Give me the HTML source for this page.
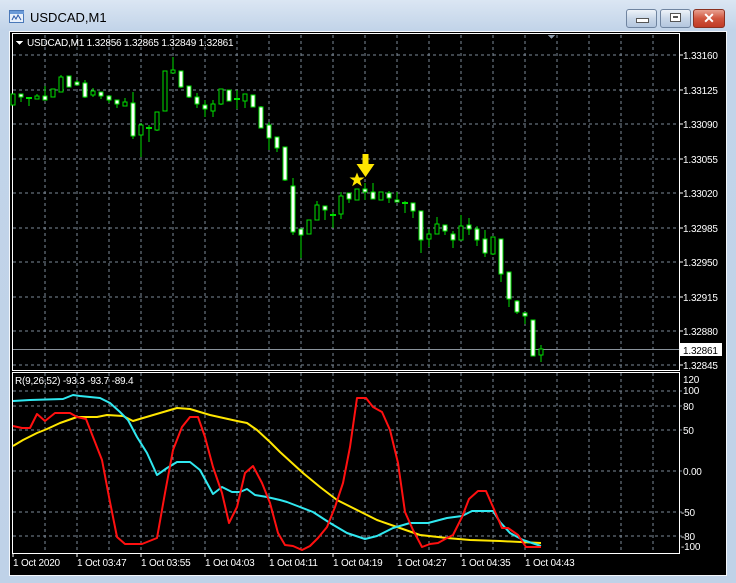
<!DOCTYPE html>
<html><head><meta charset="utf-8"><style>
html,body{margin:0;padding:0;width:736px;height:583px;overflow:hidden;background:#c4d5e8;font-family:"Liberation Sans",sans-serif}
.win{position:absolute;left:0;top:0;width:736px;height:583px;background:linear-gradient(#dbe6f3,#c2d4e9 30px,#bfd2e8);}
.ttl{position:absolute;left:30px;top:10px;font-size:13px;color:#000}
.btn{position:absolute;top:9px;height:17px;border:1px solid #6f84a0;border-radius:3px;background:linear-gradient(#eef3f9,#c9d7e8 50%,#b3c6de)}
</style></head><body><div class="win">
<svg style="position:absolute;left:9px;top:10px" width="16" height="14"><rect x="0.5" y="0.5" width="14" height="12" fill="#e8f0fb" stroke="#4a78b8"/><rect x="1" y="1" width="14" height="3" fill="#6a9ad8"/><path d="M3 10 L5 6 L7 9 L9 5 L12 10" stroke="#2a58a8" fill="none"/></svg>
<div class="ttl">USDCAD,M1</div>
<div class="btn" style="left:626px;width:29px"><div style="position:absolute;left:9px;top:8px;width:11px;height:3px;background:#fff;border:1px solid #555"></div></div>
<div class="btn" style="left:660px;width:29px"><div style="position:absolute;left:9px;top:3px;width:9px;height:7px;background:#fff;border:1px solid #555"><div style="margin:2px;height:2px;background:#555"></div></div></div>
<div class="btn" style="left:693px;width:30px;background:linear-gradient(#e8a090,#d0553e 50%,#c03a25);border-color:#8a3020;color:#fff;font-weight:bold;font-size:14px;text-align:center;line-height:17px">✕</div>
<svg style="position:absolute;left:0;top:0" width="736" height="583" shape-rendering="crispEdges" font-family="Liberation Sans, sans-serif" font-size="10" letter-spacing="-0.2">
<rect x="9" y="31" width="718" height="545" fill="#f4f7fb"/>
<rect x="10" y="32" width="716" height="543" fill="#000"/>
<g stroke="#7d8a98" stroke-dasharray="3,3" fill="none">
<path d="M45 35V370M77 35V370M109 35V370M141 35V370M173 35V370M205 35V370M237 35V370M269 35V370M301 35V370M333 35V370M365 35V370M397 35V370M429 35V370M461 35V370M493 35V370M525 35V370M557 35V370M589 35V370M621 35V370M653 35V370"/>
<path d="M45 373V553M77 373V553M109 373V553M141 373V553M173 373V553M205 373V553M237 373V553M269 373V553M301 373V553M333 373V553M365 373V553M397 373V553M429 373V553M461 373V553M493 373V553M525 373V553M557 373V553M589 373V553M621 373V553M653 373V553"/>
<path d="M13 55H683M13 90H683M13 124H683M13 159H683M13 193H683M13 228H683M13 262H683M13 297H683M13 331H683M13 365H683"/>
<path d="M13 391H683M13 406H683M13 430H683M13 471H683M13 512H683M13 536H683"/>
</g>
<path d="M13 349.5H680" stroke="#8a939c"/>
<rect x="12.5" y="33.5" width="667" height="337" fill="none" stroke="#fff"/>
<rect x="12.5" y="372.5" width="667" height="181" fill="none" stroke="#fff"/>
<path d="M548 35h7l-3.5 4z" fill="#8a98a8"/>
<path d="M16 41h7l-3.5 4z" fill="#fff"/>
<text x="27" y="46" fill="#fff">USDCAD,M1  1.32856 1.32865 1.32849 1.32861</text>
<g fill="#fff">
<text x="683" y="59">1.33160</text><text x="683" y="94">1.33125</text><text x="683" y="128">1.33090</text><text x="683" y="163">1.33055</text><text x="683" y="197">1.33020</text><text x="683" y="232">1.32985</text><text x="683" y="266">1.32950</text><text x="683" y="301">1.32915</text><text x="683" y="335">1.32880</text><text x="683" y="369">1.32845</text>
<text x="683" y="383">120</text><text x="683" y="394">100</text><text x="683" y="410">80</text><text x="683" y="434">50</text><text x="683" y="475">0.00</text><text x="681" y="516">-50</text><text x="681" y="540">-80</text><text x="681" y="550">-100</text>
<text x="15" y="384">R(9,26,52) -93.3 -93.7 -89.4</text>
<text x="13" y="566">1 Oct 2020</text><text x="77" y="566">1 Oct 03:47</text><text x="141" y="566">1 Oct 03:55</text><text x="205" y="566">1 Oct 04:03</text><text x="269" y="566">1 Oct 04:11</text><text x="333" y="566">1 Oct 04:19</text><text x="397" y="566">1 Oct 04:27</text><text x="461" y="566">1 Oct 04:35</text><text x="525" y="566">1 Oct 04:43</text>
</g>
<g stroke="#fff"><path d="M680 55h3M680 90h3M680 124h3M680 159h3M680 193h3M680 228h3M680 262h3M680 297h3M680 331h3M680 365h3M13 554v3M77 554v3M141 554v3M205 554v3M269 554v3M333 554v3M397 554v3M461 554v3M525 554v3"/></g>
<rect x="680" y="343" width="42" height="13" fill="#fff"/>
<text x="683" y="354" fill="#000">1.32861</text>
<g stroke="#00e000" fill="none" stroke-width="1">
<path d="M13 94V105M21 94V102M29 97V106M37 94V99M45 86V100M53 89V97M61 75V92M69 76V87M77 80V85M85 80V98M93 88V97M101 92V99M109 96V103M117 100V108M125 98V106M133 92V139M141 123V157M149 125V142M157 112V131M165 71V111M173 57V73M181 71V88M189 86V98M197 93V108M205 100V117M213 100V117M221 89V105M229 90V101M237 90V109M245 94V108M253 95V107M261 106V128M269 122V150M277 137V152M285 147V181M293 178V235M301 229V258M309 220V234M317 201V220M325 206V220M333 212V228M341 192V219M349 193V203M357 189V200M365 183V200M373 183V199M381 192V200M389 191V203M397 192V202M405 201V213M413 203V218M421 211V253M429 229V247M437 217V234M445 225V235M453 231V248M461 215V240M469 218V235M477 226V246M485 230V257M493 237V255M501 239V282M509 272V307M517 300V314M525 312V324M533 320V356M541 345V362"/>
<path d="M26 98h6M146 128h6M234 99h6M330 215h6M402 203h6" stroke-width="2"/>
</g>
<g stroke="#00e000" fill="#fff">
<rect x="11" y="94" width="4" height="11" fill="#000"/><rect x="19" y="94" width="4" height="3"/><rect x="35" y="96" width="4" height="3" fill="#000"/><rect x="43" y="96" width="4" height="4"/><rect x="51" y="89" width="4" height="8" fill="#000"/><rect x="59" y="77" width="4" height="15" fill="#000"/><rect x="67" y="76" width="4" height="11"/><rect x="75" y="82" width="4" height="3"/><rect x="83" y="83" width="4" height="14"/><rect x="91" y="91" width="4" height="4" fill="#000"/><rect x="99" y="92" width="4" height="4"/><rect x="107" y="96" width="4" height="4"/><rect x="115" y="100" width="4" height="4"/><rect x="123" y="102" width="4" height="4" fill="#000"/><rect x="131" y="103" width="4" height="33"/><rect x="139" y="125" width="4" height="10" fill="#000"/><rect x="155" y="112" width="4" height="18" fill="#000"/><rect x="163" y="71" width="4" height="40" fill="#000"/><rect x="171" y="70" width="4" height="3" fill="#000"/><rect x="179" y="71" width="4" height="16"/><rect x="187" y="86" width="4" height="11"/><rect x="195" y="97" width="4" height="7"/><rect x="203" y="105" width="4" height="4"/><rect x="211" y="104" width="4" height="7" fill="#000"/><rect x="219" y="89" width="4" height="15" fill="#000"/><rect x="227" y="90" width="4" height="11"/><rect x="243" y="94" width="4" height="7" fill="#000"/><rect x="251" y="95" width="4" height="12"/><rect x="259" y="107" width="4" height="21"/><rect x="267" y="125" width="4" height="13"/><rect x="275" y="137" width="4" height="11"/><rect x="283" y="147" width="4" height="33"/><rect x="291" y="186" width="4" height="46"/><rect x="299" y="229" width="4" height="6"/><rect x="307" y="220" width="4" height="14" fill="#000"/><rect x="315" y="205" width="4" height="15" fill="#000"/><rect x="323" y="206" width="4" height="4"/><rect x="339" y="196" width="4" height="18" fill="#000"/><rect x="347" y="193" width="4" height="6"/><rect x="355" y="189" width="4" height="11" fill="#000"/><rect x="363" y="189" width="4" height="3"/><rect x="371" y="192" width="4" height="7"/><rect x="379" y="192" width="4" height="8" fill="#000"/><rect x="387" y="193" width="4" height="5"/><rect x="395" y="200" width="4" height="2"/><rect x="411" y="203" width="4" height="8"/><rect x="419" y="211" width="4" height="29"/><rect x="427" y="234" width="4" height="5" fill="#000"/><rect x="435" y="224" width="4" height="10" fill="#000"/><rect x="443" y="225" width="4" height="6"/><rect x="451" y="234" width="4" height="6"/><rect x="459" y="226" width="4" height="14" fill="#000"/><rect x="467" y="225" width="4" height="4"/><rect x="475" y="229" width="4" height="11"/><rect x="483" y="239" width="4" height="14"/><rect x="491" y="237" width="4" height="17" fill="#000"/><rect x="499" y="239" width="4" height="35"/><rect x="507" y="272" width="4" height="27"/><rect x="515" y="301" width="4" height="11"/><rect x="523" y="313" width="4" height="3"/><rect x="531" y="320" width="4" height="36"/><rect x="539" y="349" width="4" height="6" fill="#000"/>
</g>
<g shape-rendering="auto" fill="#ffe600">
<path d="M357 172.5l2 5h5.5l-4.5 3.3 1.8 5.4-4.8-3.3-4.8 3.3 1.8-5.4-4.5-3.3h5.5z"/>
<path d="M362.5 154h6v10h6l-9 13-9-13h6z"/>
</g>
<g fill="none" stroke-width="2" shape-rendering="auto" stroke-linejoin="round">
<polyline stroke="#ffe600" points="13,446 23,440 37,433 47,429 60,423 77,417 97,417 107,415 123,416 133,421 143,418 160,413 177,408 190,409 210,415 237,421 247,423 257,430 270,442 280,452 303,473 320,487 337,500 357,510 377,520 397,527 420,535 447,538 470,540 500,541 541,543"/>
<polyline stroke="#30e8f0" points="13,401 30,400 63,399 73,395 80,396 100,398 110,403 120,412 128,420 137,437 147,453 157,475 167,468 177,462 190,462 200,470 213,494 222,487 232,492 240,492 247,489 255,495 267,497 280,500 287,502 300,507 313,512 330,523 347,533 365,539 377,536 393,528 410,523 428,523 447,518 462,516 472,511 493,511 500,522 510,533 523,540 541,546"/>
<polyline stroke="#ff1010" points="13,426 22,428 30,428 37,414 45,421 55,413 63,413 70,413 77,417 86,419 93,437 102,460 109,497 117,537 125,544 142,544 157,538 165,493 173,450 182,427 190,417 198,417 205,437 213,467 222,493 229,523 237,507 245,473 253,466 262,483 270,503 278,533 285,545 293,546 302,550 310,546 318,538 327,527 335,507 343,483 350,447 357,398 366,398 373,407 382,412 390,430 398,463 405,512 413,530 422,547 430,544 438,543 447,538 453,535 462,517 469,499 478,491 486,491 493,507 502,528 508,528 518,535 526,547 541,547"/>
</g>
</svg>
</div></body></html>
